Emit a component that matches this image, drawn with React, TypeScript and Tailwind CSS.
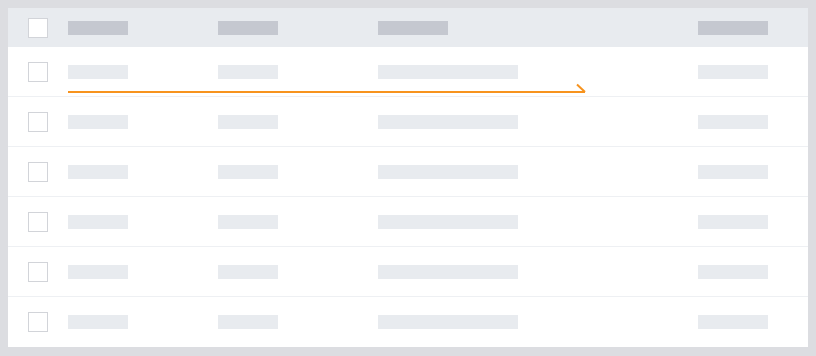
const rows = [0, 1, 2, 3, 4, 5];

function Check() {
  return <div className="h-5 w-5 shrink-0 border border-[#d2d4d9] bg-white" />;
}

function Cells({ head }: { head?: boolean }) {
  const bar = head ? "bg-[#c5c8d0]" : "bg-[#e8ebef]";
  return (
    <>
      <div className="ml-5 w-[150px] shrink-0">
        <div className={`h-[14px] w-[60px] ${bar}`} />
      </div>
      <div className="w-[160px] shrink-0">
        <div className={`h-[14px] w-[60px] ${bar}`} />
      </div>
      <div className="w-[320px] shrink-0">
        <div className={`h-[14px] ${head ? "w-[70px]" : "w-[140px]"} ${bar}`} />
      </div>
      <div className={`h-[14px] w-[70px] ${bar}`} />
    </>
  );
}

export default function App() {
  return (
    <div className="min-h-[356px] w-[816px] bg-[#dcdde1] px-2 pt-2">
      <div className="bg-white">
        <div className="flex h-[39px] items-center bg-[#e8ebef] pl-5">
          <Check />
          <Cells head />
        </div>
        {rows.map((i) => (
          <div
            key={i}
            className={`relative flex h-[50px] items-center pl-5 ${
              i < rows.length - 1 ? "border-b border-[#eef0f3]" : ""
            }`}
          >
            <Check />
            <Cells />
            {i === 0 && (
              <svg
                className="absolute left-[60px] top-[36px]"
                width="520"
                height="12"
                viewBox="0 0 520 12"
              >
                <path
                  d="M0 9H517M509 1.5L517 9"
                  fill="none"
                  stroke="#f7931e"
                  strokeWidth="2"
                />
              </svg>
            )}
          </div>
        ))}
      </div>
    </div>
  );
}
